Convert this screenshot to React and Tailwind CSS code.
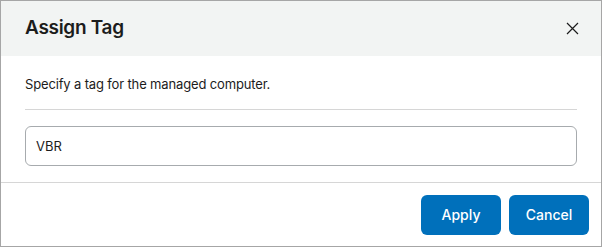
import React from 'react';

const App = () => {
  return (
    <div
      className="w-[602px] h-[247px] border border-[#a6a6a6] bg-white flex flex-col text-[#1c1c1c]"
      style={{ fontFamily: 'Inter, "Noto Sans", sans-serif' }}
    >
      {/* Header */}
      <div className="h-[55px] bg-[#f2f4f3] flex items-center justify-between pl-6 pr-[22px] shrink-0">
        <h1 className="text-[19px] font-semibold tracking-[-0.3px]">Assign Tag</h1>
        <button className="w-[14px] h-[14px] flex items-center justify-center">
          <svg width="13" height="13" viewBox="0 0 13 13" fill="none" stroke="#1c1c1c" strokeWidth="1.2">
            <path d="M1 1L12 12M12 1L1 12" />
          </svg>
        </button>
      </div>

      {/* Body */}
      <div className="px-6 pt-[18px] pb-[16px] border-b border-[#d6d6d6]">
        <p className="text-[13px] leading-[20px] tracking-[-0.15px]">Specify a tag for the managed computer.</p>
        <div className="mt-[15px] h-px bg-[#d6d6d6]" />
        <input
          defaultValue="VBR"
          className="mt-[16px] w-full h-[40px] rounded-[6px] border border-[#a7abae] px-[10px] text-[13px] text-[#1c1c1c] outline-none"
          style={{ fontFamily: 'Inter, "Noto Sans", sans-serif' }}
        />
      </div>

      {/* Footer */}
      <div className="flex-1 flex items-center justify-end gap-[8px] pr-3">
        <button className="w-[80px] h-[40px] rounded-[6px] bg-[#0070bb] text-white text-[14px] font-medium">
          Apply
        </button>
        <button className="w-[80px] h-[40px] rounded-[6px] bg-[#0070bb] text-white text-[14px] font-medium">
          Cancel
        </button>
      </div>
    </div>
  );
};

export default App;
